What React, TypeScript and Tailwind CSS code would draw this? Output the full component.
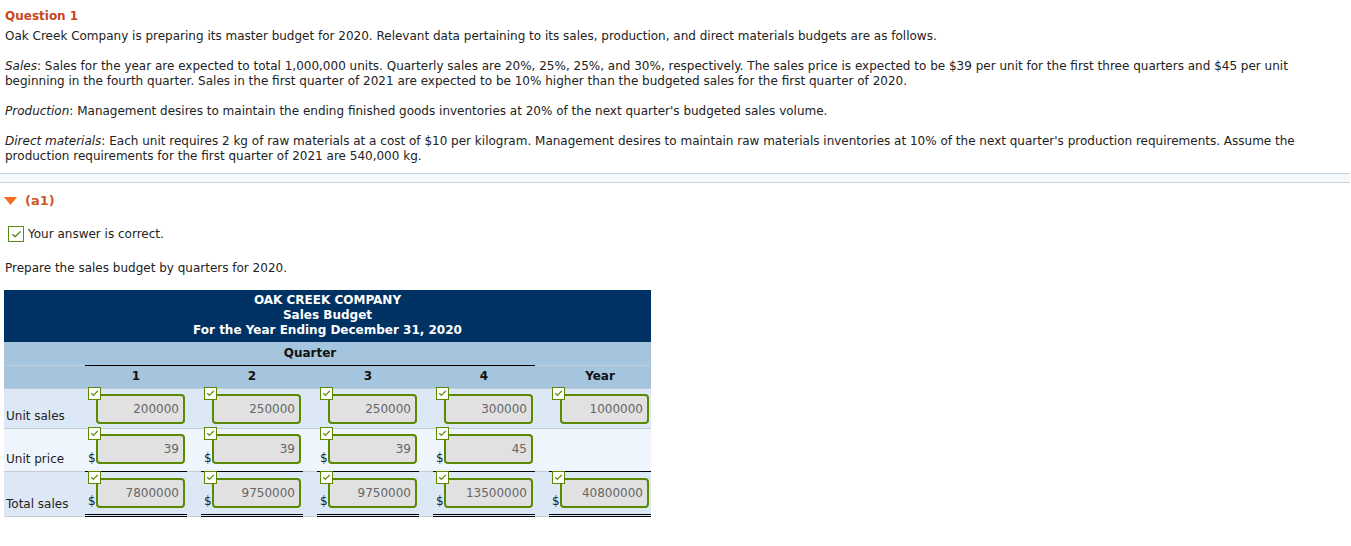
import { Check } from 'lucide-react'

const font = { fontFamily: '"DejaVu Sans", Verdana, sans-serif' }

function Tick({ big }: { big?: boolean }) {
  if (big) {
    return (
      <span className="inline-flex h-[16px] w-[16px] items-center justify-center border-[1.5px] border-[#5b8a1e] bg-white">
        <Check className="h-[11px] w-[11px] text-[#5b8a1e]" strokeWidth={3} />
      </span>
    )
  }
  return (
    <span className="absolute -left-[8px] -top-[7px] flex h-[13px] w-[13px] items-center justify-center border border-[#5b8a00] bg-white">
      <Check className="h-[9px] w-[9px] text-[#5b8a00]" strokeWidth={3} />
    </span>
  )
}

function Field({ value, dollar, top }: { value: string; dollar?: boolean; top: string }) {
  return (
    <div className={`relative flex h-full items-end pl-[3px] ${top}`}>
      <span className="w-[8px] pb-[5px] text-[12px] leading-[15px] text-[#222]">{dollar ? '$' : ''}</span>
      <div className="relative self-start">
        <Tick />
        <div className="flex h-[30px] w-[89px] items-center justify-end rounded-[4px] border-2 border-[#5b8a00] bg-[#e1e1e1] pr-[4px] text-[12px] text-[#666]">
          {value}
        </div>
      </div>
    </div>
  )
}

const Gap = ({ cls }: { cls: string }) => <div className={`w-[14px] ${cls}`} />

export default function App() {
  const rows = [
    { label: 'Unit sales', vals: ['200000', '250000', '250000', '300000', '1000000'], dollar: false },
    { label: 'Unit price', vals: ['39', '39', '39', '45', ''], dollar: true },
    { label: 'Total sales', vals: ['7800000', '9750000', '9750000', '13500000', '40800000'], dollar: true },
  ]

  return (
    <div className="min-h-[546px] bg-white text-[12px] leading-[15px] text-[#222]" style={font}>
      <div className="px-[5px] pt-[9px]">
        <div className="text-[12px] font-bold text-[#c8461b]">Question 1</div>
        <p className="mt-[5px]">
          Oak Creek Company is preparing its master budget for 2020. Relevant data pertaining to its sales, production, and direct materials budgets are as follows.
        </p>
        <p className="mt-[15px]">
          <i>Sales</i>: Sales for the year are expected to total 1,000,000 units. Quarterly sales are 20%, 25%, 25%, and 30%, respectively. The sales price is expected to be $39 per unit for the first three quarters and $45 per unit
          <br />
          beginning in the fourth quarter. Sales in the first quarter of 2021 are expected to be 10% higher than the budgeted sales for the first quarter of 2020.
        </p>
        <p className="mt-[15px]">
          <i>Production</i>: Management desires to maintain the ending finished goods inventories at 20% of the next quarter's budgeted sales volume.
        </p>
        <p className="mt-[15px]">
          <i>Direct materials</i>: Each unit requires 2 kg of raw materials at a cost of $10 per kilogram. Management desires to maintain raw materials inventories at 10% of the next quarter's production requirements. Assume the
          <br />
          production requirements for the first quarter of 2021 are 540,000 kg.
        </p>
      </div>

      <div className="mt-[9px] h-[10px] w-[1350px] border-y border-[#c9d3e0] bg-[#f4f8fb]" />

      <div className="mt-[10px] flex items-center gap-[8px] pl-[4px]">
        <svg width="13" height="8" viewBox="0 0 13 8">
          <polygon points="0,0 13,0 6.5,8" fill="#f26c21" />
        </svg>
        <span className="text-[13px] font-bold leading-[16px] text-[#d0582a]">(a1)</span>
      </div>

      <div className="mt-[17px] flex items-center gap-[4px] pl-[8px]">
        <Tick big />
        <span>Your answer is correct.</span>
      </div>

      <p className="mt-[19px] pl-[5px]">Prepare the sales budget by quarters for 2020.</p>

      <div className="ml-[4px] mt-[14px] w-[647px]">
        <div className="bg-[#003263] pb-[4px] pt-[3px] text-center font-bold text-white">
          <div>OAK CREEK COMPANY</div>
          <div>Sales Budget</div>
          <div>For the Year Ending December 31, 2020</div>
        </div>

        <div className="bg-[#a5c5de] font-bold text-[#111]">
          <div className="flex h-[24px]">
            <div className="w-[81px] border-b border-[#c4ccd4]" />
            <div className="w-[450px] border-b border-black pt-[4px] text-center">Quarter</div>
            <div className="flex-1 border-b border-[#c4ccd4]" />
          </div>
          <div className="flex h-[23px] border-b border-[#c4ccd4]">
            <div className="w-[81px]" />
            {['1', '2', '3', '4'].map((q) => (
              <div key={q} className="flex">
                <div className="w-[102px] pt-[3px] text-center">{q}</div>
                <div className="w-[14px]" />
              </div>
            ))}
            <div className="w-[102px] pt-[3px] text-center">Year</div>
          </div>
        </div>

        {rows.map((r, i) => {
          const bg = i === 1 ? 'bg-[#eef5fd]' : 'bg-[#dde8f6]'
          const h = i === 0 ? 'h-[40px]' : i === 1 ? 'h-[43px]' : 'h-[45px]'
          const cellBorder =
            i === 0
              ? 'border-b border-[#c4ccd4]'
              : i === 1
                ? 'border-b border-black'
                : 'border-b-[3px] border-double border-black'
          const gray = 'border-b border-[#c4ccd4]'
          const top = i === 2 ? 'pt-[6px]' : 'pt-[5px]'
          return (
            <div key={r.label} className={`flex ${h} ${bg}`}>
              <div className={`flex w-[81px] items-end pb-[4px] pl-[2px] ${gray}`}>{r.label}</div>
              {r.vals.map((v, j) => (
                <div key={j} className="flex">
                  <div className={`w-[102px] ${v === '' ? (i === 1 ? 'border-b border-black' : gray) : cellBorder}`}>
                    {v !== '' && <Field value={v} dollar={r.dollar} top={top} />}
                  </div>
                  {j < 4 && <Gap cls={gray} />}
                </div>
              ))}
            </div>
          )
        })}
      </div>
    </div>
  )
}
